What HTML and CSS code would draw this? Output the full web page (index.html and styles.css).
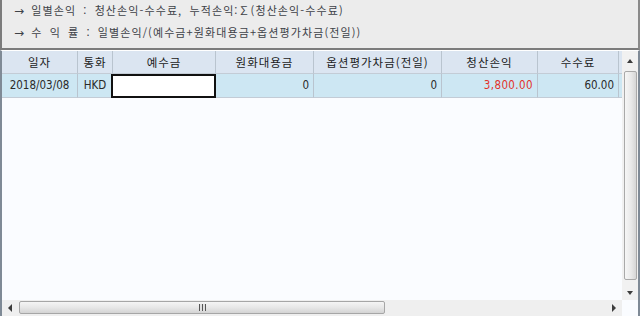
FILE: index.html
```html
<!DOCTYPE html>
<html lang="ko">
<head>
<meta charset="utf-8">
<title>일별손익</title>
<link rel="stylesheet" href="styles.css">
</head>
<body>
<div class="info">
  <div class="info-line"><span class="arrow">→</span> 일별손익 : 청산손익-수수료, 누적손익:∑(청산손익-수수료)</div>
  <div class="info-line"><span class="arrow">→</span> 수 익 률 : 일별손익/(예수금+원화대용금+옵션평가차금(전일))</div>
</div>
<div class="grid">
  <div class="table">
    <div class="row head">
      <div class="cell">일자</div>
      <div class="cell">통화</div>
      <div class="cell">예수금</div>
      <div class="cell">원화대용금</div>
      <div class="cell">옵션평가차금(전일)</div>
      <div class="cell">청산손익</div>
      <div class="cell">수수료</div>
      <div class="cell filler"></div>
    </div>
    <div class="row data">
      <div class="cell num-c">2018/03/08</div>
      <div class="cell num-c">HKD</div>
      <div class="cell edit"></div>
      <div class="cell num">0</div>
      <div class="cell num">0</div>
      <div class="cell num loss">3,800.00</div>
      <div class="cell num">60.00</div>
      <div class="cell filler"></div>
    </div>
  </div>
  <div class="vscroll">
    <div class="sbtn sbtn-up"><span class="tri up"></span></div>
    <div class="vthumb"></div>
    <div class="sbtn sbtn-down"><span class="tri down"></span></div>
  </div>
  <div class="hscroll">
    <div class="sbtn"><span class="tri left"></span></div>
    <div class="htrack">
      <div class="hthumb"><span class="grip"></span></div>
    </div>
    <div class="sbtn"><span class="tri right"></span></div>
  </div>
  <div class="corner"></div>
</div>
</body>
</html>
```
FILE: styles.css
```css
html, body {
  margin: 0;
  padding: 0;
}

body {
  width: 640px;
  height: 316px;
  overflow: hidden;
  background: #ffffff;
  font-family: "Noto Sans CJK KR", "Noto Sans", sans-serif;
}

/* formula notes panel */
.info {
  box-sizing: border-box;
  height: 50px;
  background: #ececec;
  border-left: 2px solid #7c7c7c;
  border-right: 2px solid #8a8a8a;
  border-bottom: 2px solid #7c7c7c;
  padding: 0 0 0 12px;
  color: #3e4248;
  font-size: 11px;
  letter-spacing: 1.1px;
  word-spacing: 3px;
}

.info-line {
  height: 22px;
  line-height: 21px;
  white-space: pre;
}

.arrow {
  font-family: "DejaVu Sans", sans-serif;
  font-size: 12px;
  letter-spacing: 0;
}

/* data grid */
.grid {
  box-sizing: border-box;
  height: 266px;
  border-left: 2px solid #7f8a96;
  border-right: 2px solid #7f8a96;
  border-top: 1px solid #ffffff;
  display: grid;
  grid-template-columns: 620px 16px;
  grid-template-rows: 249px 16px;
  background: #fafcff;
}

.table {
  overflow: hidden;
}

.row {
  display: grid;
  grid-template-columns: 76px 35px 103px 98px 128px 96px 81px 1fr;
}

.cell {
  box-sizing: border-box;
  border-right: 1px solid #b9c4cf;
  border-bottom: 1px solid #c3ccd6;
  font-size: 11.5px;
  color: #1a1a1a;
  white-space: nowrap;
  overflow: hidden;
}

.filler {
  border-right: none;
}

.head .cell {
  height: 23px;
  line-height: 22px;
  text-align: center;
  letter-spacing: 1px;
  background: #dbe5f1;
}

.data .cell {
  height: 24px;
  line-height: 23px;
  background: #cde7f3;
}

.num, .num-c {
  font-family: "DejaVu Sans Condensed", "DejaVu Sans", sans-serif;
  font-stretch: condensed;
  font-size: 11.5px;
  color: #2a2a2a;
}

.num-c {
  text-align: center;
}

.num {
  text-align: right;
  padding-right: 4px;
}

.loss {
  color: #e2332b;
  letter-spacing: 0.4px;
}

.data .edit {
  background: #ffffff;
  border: 2px solid #111111;
  margin-left: -2px;
  width: 105px;
  height: 24px;
}

/* scroll bars */
.vscroll {
  display: flex;
  flex-direction: column;
  background: #f1f1f1;
}

.sbtn {
  flex: 0 0 18px;
  display: flex;
  align-items: center;
  justify-content: center;
}

.vthumb {
  flex: 1;
  margin: 0 1px 1px 2px;
  border: 1px solid #a9a9a9;
  border-radius: 2px;
  background: linear-gradient(to right, #f6f6f6, #e9e9e9 55%, #d6d6d6);
}

.vscroll .sbtn-up {
  flex-basis: 20px;
}

.vscroll .sbtn-down {
  flex-basis: 19px;
  padding-top: 4px;
  box-sizing: border-box;
}

.hscroll {
  display: flex;
  background: #efefef;
}

.hscroll .sbtn {
  flex-basis: 16px;
}

.htrack {
  flex: 1;
  display: flex;
  padding: 1px 0 2px 1px;
}

.hthumb {
  box-sizing: border-box;
  width: 366px;
  border: 1px solid #a6a6a6;
  border-radius: 2px;
  background: linear-gradient(to bottom, #f5f5f5, #e7e7e7 50%, #d4d4d4);
  display: flex;
  align-items: center;
  justify-content: center;
}

.grip {
  width: 7px;
  height: 7px;
  background: repeating-linear-gradient(to right, #555 0 1px, #e0e0e0 1px 3px);
}

.corner {
  background: #fafcff;
}

.tri {
  width: 0;
  height: 0;
  border-style: solid;
}

.tri.up {
  border-width: 0 3px 4px 3px;
  border-color: transparent transparent #3c3c3c transparent;
}

.tri.down {
  border-width: 4px 3px 0 3px;
  border-color: #3c3c3c transparent transparent transparent;
}

.tri.left {
  border-width: 4px 4px 4px 0;
  border-color: transparent #3c3c3c transparent transparent;
}

.tri.right {
  border-width: 4px 0 4px 4px;
  border-color: transparent transparent transparent #3c3c3c;
}
```
